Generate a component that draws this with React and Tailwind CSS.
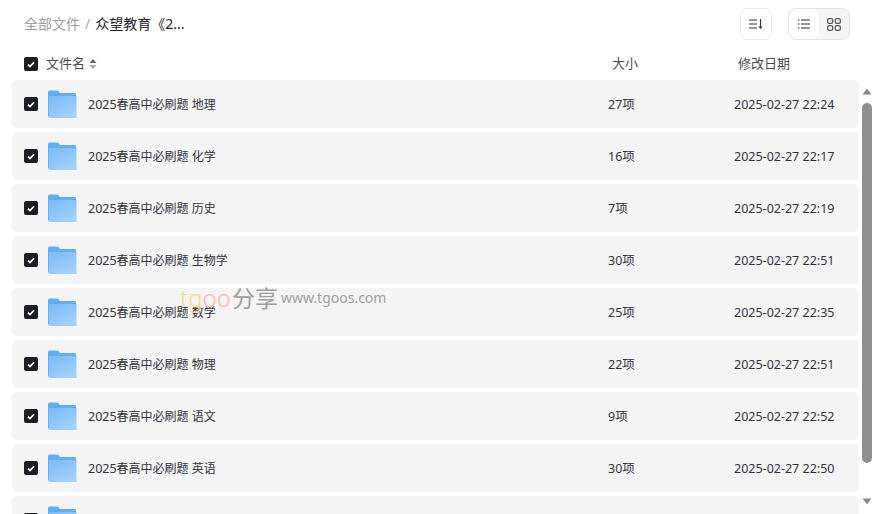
const F = "font-['Noto_Sans','Noto_Sans_CJK_SC',sans-serif]";

const rows = [
  ["地理", "27项", "2025-02-27 22:24"],
  ["化学", "16项", "2025-02-27 22:17"],
  ["历史", "7项", "2025-02-27 22:19"],
  ["生物学", "30项", "2025-02-27 22:51"],
  ["数学", "25项", "2025-02-27 22:35"],
  ["物理", "22项", "2025-02-27 22:51"],
  ["语文", "9项", "2025-02-27 22:52"],
  ["英语", "30项", "2025-02-27 22:50"],
  ["", "", ""],
];

function Check() {
  return (
    <span className="flex h-[14px] w-[14px] shrink-0 items-center justify-center rounded-[2px] bg-[#1d1d25]">
      <svg width="8" height="7" viewBox="0 0 8 7" fill="none">
        <path d="M1 3.6 3 5.6 7 1.2" stroke="#fff" strokeWidth="1.7" />
      </svg>
    </span>
  );
}

function Folder() {
  return (
    <svg width="30" height="30" viewBox="0 0 30 30" className="block shrink-0">
      <defs>
        <linearGradient id="fg" x1="0.2" y1="0" x2="0.8" y2="1">
          <stop offset="0" stopColor="#7cbcf8" />
          <stop offset="1" stopColor="#a6d2fb" />
        </linearGradient>
      </defs>
      <path d="M1 2.5Q1 1 2.5 1H10Q11 1 11.8 1.9L13.2 3.5H27.5Q29 3.5 29 5V27.5H2.5Q1 27.5 1 26Z" fill="#62aef3" />
      <path d="M2 6.5H29.5V28.5H3Q2 28.5 2 27.5Z" fill="url(#fg)" />
      <rect x="22" y="9" width="4" height="2.5" fill="#8fc4f6" />
    </svg>
  );
}

export default function App() {
  return (
    <div className={`${F} relative h-[514px] w-[874px] overflow-hidden bg-white`}>
      <header className="flex h-[48px] items-center justify-between pl-[24px] pr-[24px]">
        <nav className="flex items-center text-[14px] leading-none">
          <span className="text-[#9b9ba0]">全部文件</span>
          <span className="ml-[5px] mr-[5px] text-[#a8a8ad]">/</span>
          <span className="text-[#22222a]">众望教育《2...</span>
        </nav>
        <div className="flex items-center gap-[16px]">
          <button className="flex h-[32px] w-[32px] items-center justify-center rounded-[8px] border border-[#e8e8e8] bg-white">
            <svg width="14" height="12" viewBox="0 0 14 12" fill="none" stroke="#33333b" strokeWidth="1.2">
              <path d="M0 2H8M0 6H8M0 10H8M11.5 1V10" />
              <path d="M9.5 8.5 11.5 11 13.5 8.5Z" fill="#33333b" stroke="none" />
            </svg>
          </button>
          <div className="flex h-[32px] w-[62px] rounded-[8px] border border-[#e4e4e4] bg-[#f4f4f4]">
            <span className="flex w-[30px] items-center justify-center rounded-[7px] bg-white">
              <svg width="12" height="10" viewBox="0 0 12 10" fill="none" stroke="#2a2a32" strokeWidth="1.1">
                <path d="M3 1H12M3 5H12M3 9H12M0 1H1.5M0 5H1.5M0 9H1.5" />
              </svg>
            </span>
            <span className="flex flex-1 items-center justify-center">
              <svg width="14" height="13" viewBox="0 0 14 13" fill="none" stroke="#55555c" strokeWidth="1.3">
                <rect x="0.7" y="0.7" width="5" height="4.6" rx="1.4" />
                <rect x="8.3" y="0.7" width="5" height="4.6" rx="1.4" />
                <rect x="0.7" y="7.7" width="5" height="4.6" rx="1.4" />
                <rect x="8.3" y="7.7" width="5" height="4.6" rx="1.4" />
              </svg>
            </span>
          </div>
        </div>
      </header>

      <div className="flex h-[32px] items-center pl-[24px] text-[13px] text-[#4a4a55]">
        <Check />
        <span className="ml-[8px]">文件名</span>
        <svg width="8" height="12" viewBox="0 0 8 12" className="ml-[4px]">
          <path d="M4 1 7.5 5H.5Z" fill="#66666c" />
          <path d="M4 11 .5 7H7.5Z" fill="#a8a8ac" />
        </svg>
        <span className="ml-[515px] w-[126px]">大小</span>
        <span>修改日期</span>
      </div>

      <div className="flex flex-col gap-[4px] pl-[12px] pr-[15px]">
        {rows.map((r, i) => (
          <div key={i} className="flex h-[48px] shrink-0 items-center rounded-[6px] bg-[#f4f4f4] pl-[12px] text-[12.5px] leading-[14px] text-[#33333f]">
            <Check />
            <span className="ml-[9px] translate-y-[0.5px]"><Folder /></span>
            {r[0] && (
              <>
                <span className="ml-[11px] w-[520px] pt-[2px] text-[12px]"><span className="text-[12.5px]">2025</span>春高中必刷题 {r[0]}</span>
                <span className="w-[126px] pt-[2px]">{r[1]}</span>
                <span className="pt-[2px]">{r[2]}</span>
              </>
            )}
          </div>
        ))}
      </div>

      <div className="absolute left-[180px] top-[291px] flex items-center whitespace-nowrap">
        <span className="text-[24px] font-light leading-[14px] text-[#fbd88f]">tg</span>
        <span className="text-[24px] font-light leading-[14px] text-[#fcb9a8]">oo</span>
        <span className="ml-[1px] text-[23px] leading-[14px] text-[#a0a0a0]">分享</span>
        <span className="ml-[3px] text-[14px] leading-[14px] text-[#a0a0a0]">www.tgoos.com</span>
      </div>

      <div className="absolute right-[2px] top-[80px] flex h-[434px] w-[10px] flex-col items-center">
        <svg width="10" height="7" viewBox="0 0 10 7" className="mt-[8px]"><path d="M5 .5 9.5 6.5H.5Z" fill="#8a8a8a" /></svg>
        <div className="mt-[8px] h-[360px] w-[10px] rounded-full bg-[#8f8f8f]" />
        <svg width="10" height="7" viewBox="0 0 10 7" className="mt-[35px]"><path d="M5 6.5 .5 .5H9.5Z" fill="#8a8a8a" /></svg>
      </div>
    </div>
  );
}
